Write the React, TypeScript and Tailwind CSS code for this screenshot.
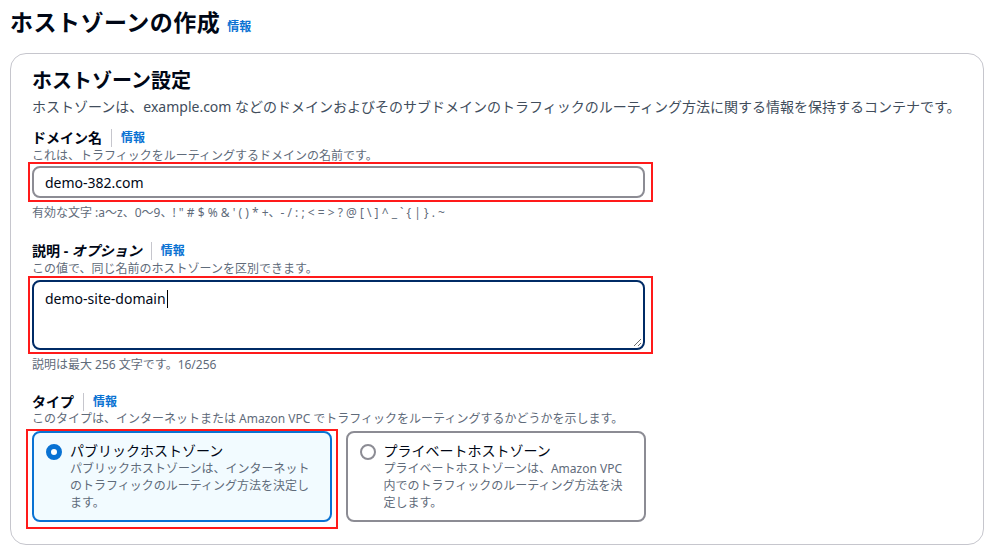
const Info = () => <span className="text-[12px] font-bold text-[#0972d3]">情報</span>

const Label = ({ children }: { children: React.ReactNode }) => (
  <div className="flex items-center h-[20px]">
    <span className="text-[14px] font-bold text-[#000716] leading-[20px]">{children}</span>
    <span className="mx-[9px] h-[18px] w-px bg-[#c6c6cd]" />
    <Info />
  </div>
)

const Hint = ({ children, className = "" }: { children: React.ReactNode; className?: string }) => (
  <div className={`text-[12px] leading-[16px] text-[#5f6b7a] ${className}`}>{children}</div>
)

const Radio = ({ checked }: { checked?: boolean }) =>
  checked ? (
    <span className="mt-[2px] h-[16px] w-[16px] shrink-0 rounded-full border-[5px] border-[#0972d3] bg-white" />
  ) : (
    <span className="mt-[2px] h-[16px] w-[16px] shrink-0 rounded-full border-2 border-[#8c8c94] bg-white" />
  )

const validChars = "有効な文字 :a〜z、0〜9、! \" # $ % & ' ( ) * +、- / : ; < = > ? @ [ \\ ] ^ _ ` { | } . ~"

export default function App() {
  return (
    <div className="h-[557px] w-[996px] overflow-hidden bg-white font-['Noto_Sans','Noto_Sans_CJK_JP',sans-serif] text-[#000716]">
      <div className="flex items-baseline gap-[7px] px-[10px] pt-[5px]">
        <h1 className="text-[23px] font-bold leading-[34px] tracking-[0.5px]">ホストゾーンの作成</h1>
        <Info />
      </div>

      <div className="mx-[10px] mt-[14px] h-[492px] w-[974px] rounded-[16px] border border-[#c6c6cd] px-[21px] pt-[13px]">
        <h2 className="text-[20px] font-bold leading-[28px]">ホストゾーン設定</h2>
        <p className="mt-[2px] text-[14px] leading-[20px] text-[#414d5c]">
          ホストゾーンは、example.com などのドメインおよびそのサブドメインのトラフィックのルーティング方法に関する情報を保持するコンテナです。
        </p>

        <div className="mt-[11px] w-[614px]">
          <Label>ドメイン名</Label>
          <Hint>これは、トラフィックをルーティングするドメインの名前です。</Hint>
          <div className="-ml-[4px] -mt-[2px] w-[625px] border-2 border-[#ff1a1a] py-[2px] pl-[2px] pr-[6px]">
            <div className="flex h-[32px] items-center rounded-[8px] border-2 border-[#8c8c94] px-[11px] text-[14px]">
              demo-382.com
            </div>
          </div>
          <Hint className="mt-[3px]">{validChars}</Hint>
        </div>

        <div className="mt-[20px] w-[614px]">
          <Label>
            説明 - <i>オプション</i>
          </Label>
          <Hint>この値で、同じ名前のホストゾーンを区別できます。</Hint>
          <div className="-ml-[4px] -mt-[1px] w-[625px] border-2 border-[#ff1a1a] py-[2px] pl-[2px] pr-[6px]">
            <div className="relative h-[70px] rounded-[8px] border-2 border-[#002b66] px-[11px] pt-[4px] text-[14px] leading-[20px]">
              demo-site-domain<span className="ml-px inline-block h-[18px] w-px translate-y-[4px] bg-black" />
              <svg className="absolute bottom-[1px] right-[1px]" width="9" height="9" viewBox="0 0 9 9">
                <path d="M8 1L1 8M8 5L5 8" stroke="#6b6b6b" strokeWidth="1" />
              </svg>
            </div>
          </div>
          <Hint className="mt-[3px]">説明は最大 256 文字です。16/256</Hint>
        </div>

        <div className="mt-[19px] w-[614px]">
          <Label>タイプ</Label>
          <Hint className="-mt-[1px]">このタイプは、インターネットまたは Amazon VPC でトラフィックをルーティングするかどうかを示します。</Hint>
          <div className="mt-[4px] grid grid-cols-2 gap-[13px]">
            <div className="-ml-[6px] -mr-[5px] -mt-[2px] border-2 border-[#ff1a1a] px-[4px] pb-[5px]">
              <div className="flex h-[91px] gap-[8px] rounded-[8px] border-2 border-[#0972d3] bg-[#f2fbff] px-[12px] pt-[9px]">
                <Radio checked />
                <div>
                  <div className="text-[14px] leading-[18px]">パブリックホストゾーン</div>
                  <Hint className="leading-[17px]">
                    パブリックホストゾーンは、インターネットのトラフィックのルーティング方法を決定します。
                  </Hint>
                </div>
              </div>
            </div>
            <div className="flex h-[91px] gap-[8px] rounded-[8px] border-2 border-[#8c8c94] px-[12px] pt-[9px]">
              <Radio />
              <div>
                <div className="text-[14px] leading-[18px]">プライベートホストゾーン</div>
                <Hint className="leading-[17px]">
                  プライベートホストゾーンは、Amazon VPC 内でのトラフィックのルーティング方法を決定します。
                </Hint>
              </div>
            </div>
          </div>
        </div>
      </div>
    </div>
  )
}
